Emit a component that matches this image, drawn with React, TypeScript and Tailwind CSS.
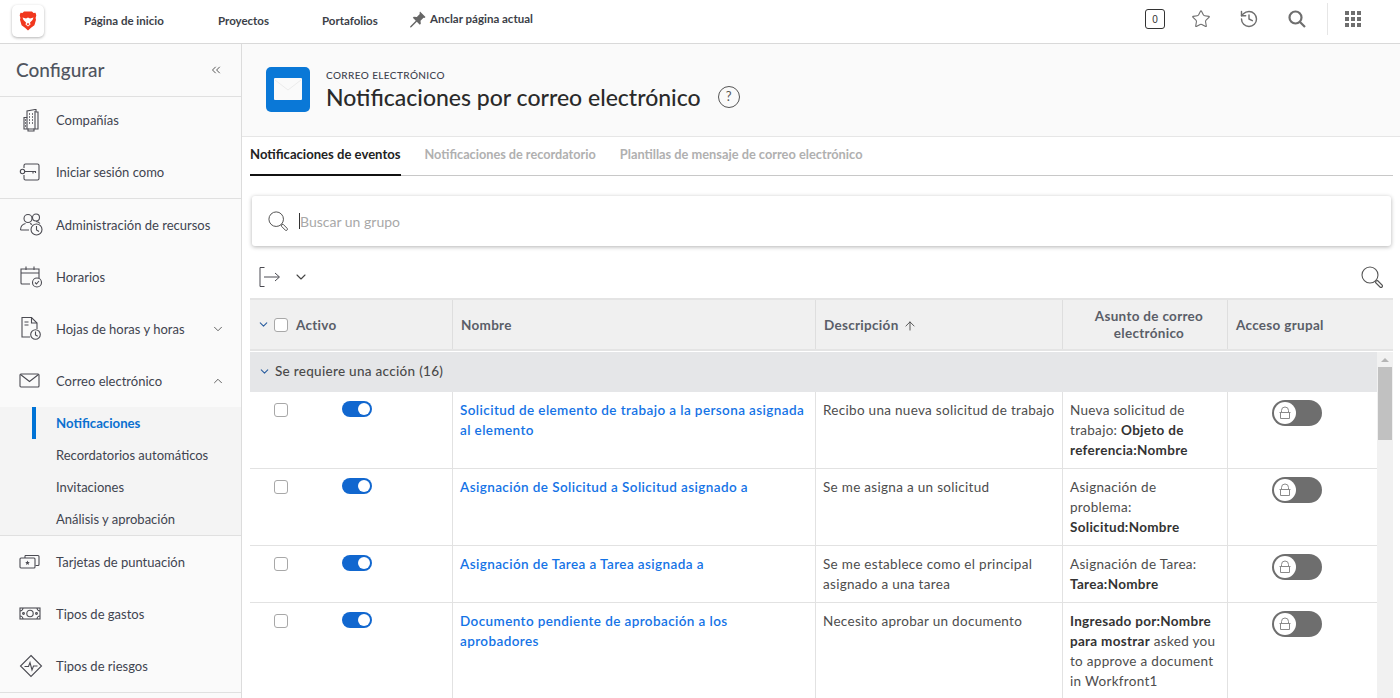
import { ChevronDown, ChevronUp, ChevronsLeft, ArrowUp, Star, History } from "lucide-react";
import { ReactNode } from "react";

const navFont = "font-['Lato','Open_Sans',sans-serif]";

const Ico = ({ children, w = 24, h = 24 }: { children: ReactNode; w?: number; h?: number }) => (
  <svg width={w} height={h} viewBox={`0 0 ${w} ${h}`} fill="none" stroke="#4b4b52" strokeWidth="1.1">
    {children}
  </svg>
);

const Magnifier = ({ size, color = "#555" }: { size: number; color?: string }) => (
  <svg width={size} height={size} viewBox="0 0 22 22" fill="none" stroke={color} strokeWidth="1.1">
    <circle cx="9" cy="9" r="8" />
    <path d="M15 15l1.500 -.5 4.500 4.500a1.200 1.200 0 0 1-2 2l-4.500-4.500z" />
  </svg>
);

const BuildingIcon = () => (
  <Ico>
    <path d="M5 9.500h3V3l8-1.500h1V4h2v17h-4v2H9v-2H5z" />
    <path d="M8 9.500V21M16 3v18M9 21h6" />
    <path d="M10 6h1M13 6h1M10 9h1M13 9h1M10 12h1M13 12h1M10 15h1M13 15h1M6 12h1M6 15h1M6 18h1" strokeWidth="1.400" />
  </Ico>
);
const KeyIcon = () => (
  <Ico>
    <path d="M5 8V5.500A1.500 1.500 0 0 1 6.500 4h12A1.500 1.500 0 0 1 20 5.500v13a1.500 1.500 0 0 1-1.500 1.500h-12A1.500 1.500 0 0 1 5 18.500V15" />
    <circle cx="3.500" cy="11.500" r="2.200" />
    <path d="M5.700 11.500H17M14 11.500v2M16.500 11.500v1.500" />
  </Ico>
);
const PeopleIcon = () => (
  <Ico w={26} h={26}>
    <circle cx="9" cy="6.500" r="4" />
    <path d="M1.500 18c0-4 3-6 5-6.500M11 11.500c1 .3 1.500.6 2 1M1.500 18H10" />
    <circle cx="17" cy="5.500" r="3.500" />
    <path d="M17 9.500c1.500 0 3 .8 4 2" />
    <circle cx="17.500" cy="17.500" r="5.500" />
    <path d="M17.500 14v4l2.500 1.500" />
  </Ico>
);
const CalendarIcon = () => (
  <Ico w={26} h={26}>
    <path d="M11 20H3a1 1 0 0 1-1-1V5h18v9" />
    <path d="M2 9h18M7 2.500V6M15 2.500V6" />
    <circle cx="18" cy="18.500" r="4.500" />
    <path d="M16 18.500l1.500 1.500 2.500-3" />
  </Ico>
);
const SheetIcon = () => (
  <Ico w={26} h={26}>
    <path d="M11 21H3V1.500h9.500L18 7v6" />
    <path d="M12.500 1.500V7H18M5.500 6h4M5.500 9h4" />
    <circle cx="16.500" cy="18.500" r="4.800" />
    <path d="M16.500 15.500v3.500l2.200 1.300" />
  </Ico>
);
const MailIcon = () => (
  <Ico w={22} h={18}>
    <rect x="1" y="2" width="19" height="13" rx="1" />
    <path d="M1.500 2.500l9 7 9-7" />
  </Ico>
);
const CardsIcon = () => (
  <Ico w={22} h={18}>
    <rect x="1" y="5" width="15" height="10" rx="1" />
    <path d="M6 2.500h13a1 1 0 0 1 1 1v8a1 1 0 0 1-1 1h-2.500M6 2.500V5" />
    <path d="M8.500 7.500l.7 1.500 1.600.2-1.200 1.100.3 1.600-1.400-.8-1.400.8.300-1.600-1.200-1.100 1.600-.2z" fill="#4b4b52" stroke="none" />
  </Ico>
);
const MoneyIcon = () => (
  <Ico w={22} h={14}>
    <rect x="1" y="1" width="20" height="11" />
    <ellipse cx="11" cy="6.500" rx="3.200" ry="3.200" />
    <circle cx="4.500" cy="6.500" r=".9" />
    <circle cx="17.500" cy="6.500" r=".9" />
    <path d="M1 4c1.500 0 3-1.500 3-3M21 4c-1.500 0-3-1.500-3-3M1 9c1.500 0 3 1.500 3 3M21 9c-1.500 0-3 1.500-3 3" />
  </Ico>
);
const RiskIcon = () => (
  <Ico w={24} h={24}>
    <path d="M12 1.500L22.500 12 12 22.500 1.500 12z" />
    <path d="M5.500 12.500h4l1.500-4 2 7.500 1.500-4h4" />
  </Ico>
);

const BraveLogo = () => (
  <svg width="18" height="20" viewBox="0 0 18 20">
    <path d="M5 .5h8l1.500 1.500 2 -.2.8 2.500-.7 2.700.4 1.800-1.600 5.400-3.400 2.600L9 19.500 6 16.800 2.600 14.200 1 8.800l.4-1.800-.7-2.700.8-2.500 2 .2z" fill="#f1371d" />
    <path d="M3.500 6.500L7 7.500 9 6.500 11 7.500 14.500 6.500 13.500 9 11 11.500 11.500 13.500 9 15.500 6.500 13.500 7 11.500 4.500 9z" fill="#fff" />
    <path d="M7.500 13L9 12l1.500 1L9 14.500z" fill="#f1371d" />
  </svg>
);

const SideItem = ({ icon, label, chevron, first }: { icon: ReactNode; label: string; chevron?: "up" | "down"; first?: boolean }) => (
  <div className={first ? "h-[49px] pb-[3px] flex items-center pl-[19px] pr-4" : "h-[52px] flex items-center pl-[19px] pr-4"}>
    <div className="w-[37px] flex items-center shrink-0">{icon}</div>
    <div className="pt-[2px] text-[13px] text-[#3f4450] whitespace-nowrap">{label}</div>
    {chevron === "down" ? <ChevronDown className="ml-auto w-[14px] h-[14px] text-[#444]" strokeWidth={1.4} /> : null}
    {chevron === "up" ? <ChevronUp className="ml-auto w-[14px] h-[14px] text-[#444]" strokeWidth={1.4} /> : null}
  </div>
);

const SubItem = ({ label, active }: { label: string; active?: boolean }) => (
  <div className="h-8 flex items-center pl-[32px]">
    <div className={active ? "w-1 h-8 bg-[#0073d6] shrink-0" : "w-1 h-8 shrink-0"}></div>
    <div className={active ? "pl-5 pt-[2px] text-[13.200px] font-bold text-[#0b70d0]" : "pl-5 pt-[2px] text-[13px] text-[#3f4450]"}>{label}</div>
  </div>
);

const Sidebar = () => (
  <div className={`w-[242px] shrink-0 bg-[#fafafa] border-r border-[#dcdcdc] ${navFont}`}>
    <div className="h-[53px] flex items-center justify-between pl-4 pr-[18px] border-b border-[#e0e0e0]">
      <div className="text-[19px] text-[#505560] font-medium">Configurar</div>
      <ChevronsLeft className="w-[14px] h-[14px] text-[#222]" strokeWidth={1.3} />
    </div>
    <SideItem icon={<BuildingIcon />} label="Compañías" first />
    <div className="border-b border-[#e0e0e0]">
      <SideItem icon={<KeyIcon />} label="Iniciar sesión como" />
    </div>
    <SideItem icon={<PeopleIcon />} label="Administración de recursos" />
    <SideItem icon={<CalendarIcon />} label="Horarios" />
    <SideItem icon={<SheetIcon />} label="Hojas de horas y horas" chevron="down" />
    <SideItem icon={<MailIcon />} label="Correo electrónico" chevron="up" />
    <div className="bg-[#f4f4f4] border-b border-[#e0e0e0]">
      <SubItem label="Notificaciones" active />
      <SubItem label="Recordatorios automáticos" />
      <SubItem label="Invitaciones" />
      <SubItem label="Análisis y aprobación" />
    </div>
    <SideItem icon={<CardsIcon />} label="Tarjetas de puntuación" />
    <SideItem icon={<MoneyIcon />} label="Tipos de gastos" />
    <div className="border-b border-[#e0e0e0]">
      <SideItem icon={<RiskIcon />} label="Tipos de riesgos" />
    </div>
  </div>
);

const TopBar = () => (
  <div className={`h-11 shrink-0 bg-white border-b border-[#d9d9d9] flex items-center ${navFont}`}>
    <div className="ml-3 w-[32px] h-[32px] mb-[2px] rounded-[5px] bg-white shadow-[0_1px_3px_rgba(0,0,0,0.3)] flex items-center justify-center">
      <BraveLogo />
    </div>
    <div className="ml-[40px] mb-[2px] w-[134px] text-[11.500px] font-bold text-[#3c3f48]">Página de inicio</div>
    <div className="w-[104px] mb-[2px] text-[11.500px] font-bold text-[#3c3f48]">Proyectos</div>
    <div className="w-[87px] mb-[2px] text-[11.500px] font-bold text-[#3c3f48]">Portafolios</div>
    <div className="flex items-center gap-1 mb-[5px] text-[11.500px] font-bold text-[#3c3f48]">
      <svg width="17" height="17" viewBox="0 0 17 17" fill="#666">
        <path d="M11 .5l5.500 5.500-1 1-1-.3-3 3 .3 3-1 1-3-3-5.500 5.500-1.300.3.300-1.300 5.500-5.500-3-3 1-1 3 .3 3-3-.3-1z" />
      </svg>
      <span>Anclar página actual</span>
    </div>
    <div className="ml-auto flex items-center mb-[5px]">
      <div className="w-5 h-5 rounded-[3px] border border-[#333] flex items-center justify-center text-[10px] text-[#333] font-['Liberation_Sans',sans-serif]">0</div>
      <Star className="ml-[26px] w-5 h-5 text-[#6e6e6e]" strokeWidth={1.3} />
      <History className="ml-[28px] w-5 h-5 text-[#6e6e6e]" strokeWidth={1.7} />
      <svg className="ml-[29px]" width="18" height="18" viewBox="0 0 18 18" fill="none" stroke="#6e6e6e" strokeWidth="2.200">
        <circle cx="7.500" cy="7.500" r="6" />
        <path d="M12 12l5 5" />
      </svg>
      <div className="ml-[21px] h-8 border-l border-[#e6e6e6]"></div>
      <div className="ml-[17px] mr-[39px] grid grid-cols-3 gap-[2px]">
        {Array.from({ length: 9 }).map((_, i) => (
          <div key={i} className="w-1 h-1 bg-[#6e6e6e]"></div>
        ))}
      </div>
    </div>
  </div>
);

const Toggle = () => (
  <div className="w-[30px] h-4 rounded-full bg-[#1167cf] flex items-center justify-end pr-[2px]">
    <div className="w-3 h-3 rounded-full bg-white"></div>
  </div>
);

const LockToggle = () => (
  <div className="w-[50px] h-[26px] rounded-full bg-[#6e6e6e] flex items-center pl-[2px]">
    <div className="w-[22px] h-[22px] rounded-full bg-white flex items-center justify-center">
      <svg width="14" height="14" viewBox="0 0 14 14" fill="none" stroke="#8a8a8a" strokeWidth="1">
        <path d="M3.500 6.500V4.500a3.500 3.500 0 0 1 7 0v2M1.500 6.500h11M2.500 6.500v6h9v-6" />
      </svg>
    </div>
  </div>
);

const Checkbox = () => <div className="w-[14px] h-[14px] rounded-[3px] border border-[#a8a8a8] bg-white"></div>;

type RowData = { h: string; name: ReactNode; desc: ReactNode; subject: ReactNode };

const rows: RowData[] = [
  {
    h: "h-[77px]",
    name: "Solicitud de elemento de trabajo a la persona asignada al elemento",
    desc: "Recibo una nueva solicitud de trabajo",
    subject: (
      <>
        Nueva solicitud de trabajo: <b className="font-bold text-[#333]">Objeto de referencia:Nombre</b>
      </>
    ),
  },
  {
    h: "h-[77px]",
    name: "Asignación de Solicitud a Solicitud asignado a",
    desc: "Se me asigna a un solicitud",
    subject: (
      <>
        Asignación de problema: <b className="font-bold text-[#333]">Solicitud:Nombre</b>
      </>
    ),
  },
  {
    h: "h-[57px]",
    name: "Asignación de Tarea a Tarea asignada a",
    desc: "Se me establece como el principal asignado a una tarea",
    subject: (
      <>
        Asignación de Tarea: <b className="font-bold text-[#333]">Tarea:Nombre</b>
      </>
    ),
  },
  {
    h: "h-[100px]",
    name: "Documento pendiente de aprobación a los aprobadores",
    desc: "Necesito aprobar un documento",
    subject: (
      <>
        <b className="font-bold text-[#333]">Ingresado por:Nombre para mostrar</b> asked you to approve a document in Workfront1
      </>
    ),
  },
];

const Table = () => (
  <div className="font-['Lato',sans-serif] overflow-hidden">
    <div className="ml-2 mr-[7px] h-[53px] bg-[#f0f0f0] border-t-2 border-b-2 border-[#e4e4e4] flex text-[13.500px] font-bold text-[#5a5e68] tracking-[0.3px]">
      <div className="w-[203px] shrink-0 flex items-center pl-[7px] border-r border-[#dedede]">
        <ChevronDown className="w-[13px] h-[13px] text-[#2c5fa0]" strokeWidth={2} />
        <div className="ml-[4px]">
          <Checkbox />
        </div>
        <div className="ml-2 mt-[2px]">Activo</div>
      </div>
      <div className="w-[363px] shrink-0 flex items-center pl-2 pt-[2px] border-r border-[#dedede]">Nombre</div>
      <div className="w-[247px] shrink-0 flex items-center gap-1 pl-2 pt-[2px] border-r border-[#dedede]">
        Descripción
        <ArrowUp className="w-[14px] h-[14px] text-[#444]" strokeWidth={1.5} />
      </div>
      <div className="w-[165px] shrink-0 flex items-center justify-center text-center leading-[17px] pl-6 pr-4 border-r border-[#dedede]">
        Asunto de correo electrónico
      </div>
      <div className="flex items-center pl-2 pt-[2px]">Acceso grupal</div>
    </div>
    <div className="ml-2 mr-[7px] flex">
      <div className="flex-1 min-w-0">
        <div className="mt-px h-[40px] pb-[2px] bg-[#e5e6e8] flex items-center pl-2 text-[13.500px] text-[#4a4a4a] font-medium tracking-[0.3px]">
          <ChevronDown className="w-[13px] h-[13px] text-[#2c5fa0]" strokeWidth={2} />
          <div className="ml-[4px]">Se requiere una acción (16)</div>
        </div>
        {rows.map((row, i) => (
          <div key={i} className={`flex ${row.h} border-b border-[#e2e2e2] text-[13.500px] leading-5 text-[#4d4d4d] tracking-[0.3px]`}>
            <div className="w-[203px] shrink-0 flex items-start pt-[11px] pl-6 border-r border-[#e2e2e2]">
              <Checkbox />
              <div className="ml-[54px] -mt-[2px]">
                <Toggle />
              </div>
            </div>
            <div className="w-[363px] shrink-0 pl-[7px] pr-2 pt-2 border-r border-[#e2e2e2] font-semibold text-[#1473e6] tracking-[0.4px]">
              {row.name}
            </div>
            <div className="w-[247px] shrink-0 pl-[7px] pr-1 pt-2 border-r border-[#e2e2e2]">{row.desc}</div>
            <div className="w-[165px] shrink-0 pl-[7px] pr-2 pt-2 border-r border-[#e2e2e2]">{row.subject}</div>
            <div className="flex-1 flex justify-center pt-2 pr-[11px]">
              <LockToggle />
            </div>
          </div>
        ))}
      </div>
      <div className="w-[16px] shrink-0 bg-[#f1f1f1] mt-px">
        <div className="h-[15px] flex items-center justify-center">
          <div className="w-0 h-0 border-l-[4px] border-r-[4px] border-b-[4px] border-l-transparent border-r-transparent border-b-[#b5b5b5]"></div>
        </div>
        <div className="h-[73px] bg-[#c1c1c1] mx-[1px]"></div>
      </div>
    </div>
  </div>
);

const Main = () => (
  <div className="flex-1 min-w-0 flex flex-col bg-white">
    <div className={`h-[93px] shrink-0 bg-[#fafafa] border-b border-[#e6e6e6] flex items-center pl-[24px] pb-[2px] ${navFont}`}>
      <div className="w-[44px] h-[45px] rounded-[5px] bg-[#0a78d7] flex items-center justify-center">
        <svg width="28" height="22" viewBox="0 0 28 22">
          <rect width="28" height="22" rx="1" fill="#fafafa" />
          <path d="M1 2l13 10L27 2" fill="none" stroke="#ececec" strokeWidth="1" />
        </svg>
      </div>
      <div className="ml-4 pt-[3px]">
        <div className="text-[10px] tracking-[0.4px] text-[#3f4450] font-medium leading-3">CORREO ELECTRÓNICO</div>
        <div className="flex items-center mt-[1px]">
          <div className="text-[23px] leading-[30px] text-[#2a2a2a] font-medium">Notificaciones por correo electrónico</div>
          <div className="ml-[17px] w-[22px] h-[22px] rounded-full border border-[#555] flex items-center justify-center text-[13px] text-[#555]">?</div>
        </div>
      </div>
    </div>
    <div className={`ml-2 mr-[7px] h-[39px] shrink-0 flex border-b border-[#c8c8c8] font-bold ${navFont}`}>
      <div className="h-[39px] pb-[2px] flex items-center border-b-2 border-[#111] text-[#222] text-[13.100px]">Notificaciones de eventos</div>
      <div className="ml-[24px] pb-[2px] flex items-center text-[#b0b0b0] text-[12.700px]">Notificaciones de recordatorio</div>
      <div className="ml-[24px] pb-[2px] flex items-center text-[#b0b0b0] text-[12.800px]">Plantillas de mensaje de correo electrónico</div>
    </div>
    <div className="ml-[10px] mr-[9px] mt-5 h-[50px] shrink-0 rounded-[3px] bg-white shadow-[0_1px_4px_rgba(0,0,0,0.3)] flex items-center pl-4 font-['Lato',sans-serif]">
      <Magnifier size={20} />
      <div className="ml-[11px] h-4 border-l border-[#333]"></div>
      <div className="text-[14px] text-[#a8a8a8]">Buscar un grupo</div>
    </div>
    <div className="ml-[17px] mr-[17px] pt-[10px] h-[52px] shrink-0 flex items-center justify-between">
      <div className="flex items-center">
        <svg width="22" height="22" viewBox="0 0 22 22" fill="none" stroke="#4b4b52" strokeWidth="1">
          <path d="M5.500 1.500H1v19h4.500M5 11h15M16 7l4.500 4-4.500 4" />
        </svg>
        <ChevronDown className="ml-3 w-4 h-4 text-[#444]" strokeWidth={1.6} />
      </div>
      <Magnifier size={22} />
    </div>
    <Table />
  </div>
);

const App = () => {
  return (
    <div className="w-[1400px] h-[698px] overflow-hidden flex flex-col bg-white">
      <TopBar />
      <div className="flex flex-1 min-h-0">
        <Sidebar />
        <Main />
      </div>
    </div>
  );
};

export default App;
